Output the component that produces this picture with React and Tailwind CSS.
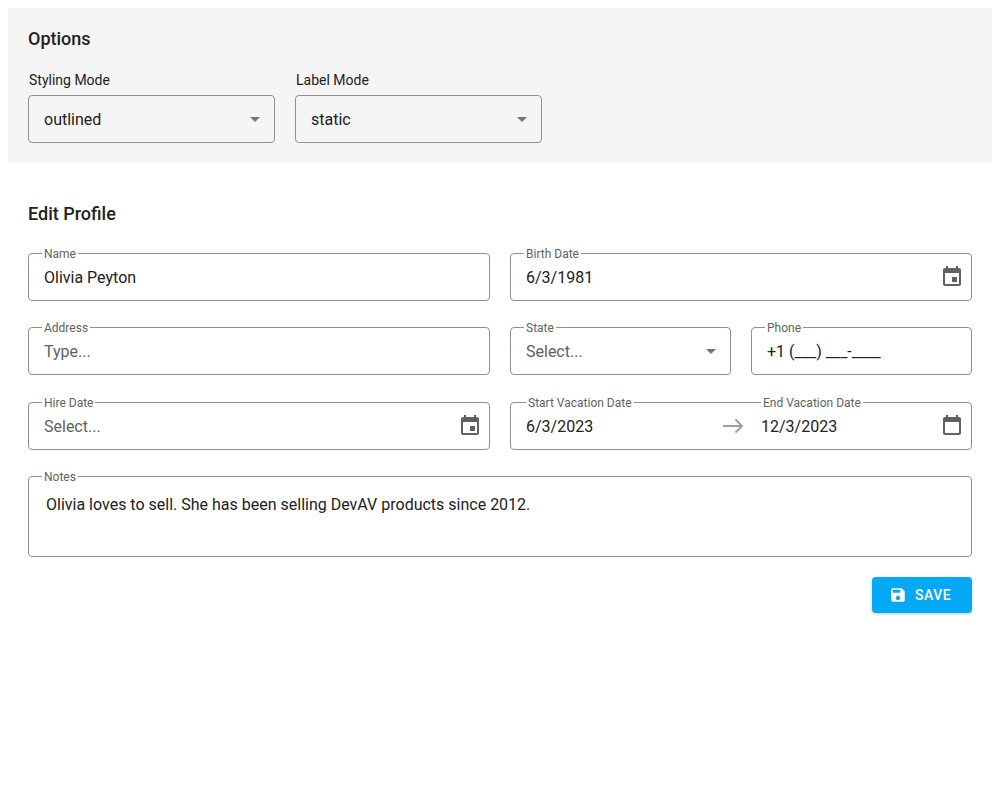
const EVENT = "M17 12h-5v5h5v-5zM16 1v2H8V1H6v2H5c-1.11 0-1.99.9-1.99 2L3 19c0 1.1.89 2 2 2h14c1.1 0 2-.9 2-2V5c0-1.1-.9-2-2-2h-1V1h-2zm3 18H5V8h14v11z";
const RANGE = "M16 1v2H8V1H6v2H5c-1.11 0-1.99.9-1.99 2L3 19c0 1.1.89 2 2 2h14c1.1 0 2-.9 2-2V5c0-1.1-.9-2-2-2h-1V1h-2zm3 18H5V8h14v11z";

function Icon({ d, className }) {
  return (
    <svg viewBox="0 0 24 24" width="24" height="24" className={className} fill="currentColor">
      <path d={d} />
    </svg>
  );
}

function Caret() {
  return <Icon d="M7 10l5 5 5-5z" className="text-[#757575] shrink-0" />;
}

function FloatLabel({ children, className = "left-[13px]" }) {
  return (
    <span className={`absolute top-[-7px] ${className} bg-white px-[2px] text-xs leading-[14px] text-[#616161] whitespace-nowrap`}>
      {children}
    </span>
  );
}

function Field({ label, value, placeholder, icon, caret, className = "" }) {
  return (
    <div className={`relative h-12 flex items-center border border-[#8f8f8f] rounded pl-[15px] pr-[7px] ${className}`}>
      <FloatLabel>{label}</FloatLabel>
      <span className={`flex-1 text-base pt-[1px] ${placeholder ? "text-[#616161]" : "text-[#212121]"}`}>{value || placeholder}</span>
      {icon && <Icon d={icon} className="text-[#616161] shrink-0" />}
      {caret && <Caret />}
    </div>
  );
}

function OptionSelect({ label, value }) {
  return (
    <div className="w-[247px]">
      <div className="text-sm leading-[16px] text-[#212121] pl-[1px] mb-[7px]">{label}</div>
      <div className="h-12 flex items-center border border-[#8f8f8f] rounded pl-[15px] pr-[7px]">
        <span className="flex-1 text-base pt-[1px] text-[#212121]">{value}</span>
        <Caret />
      </div>
    </div>
  );
}

export default function App() {
  return (
    <div className="p-2 bg-white min-h-[800px] font-['Roboto',sans-serif] text-[#212121]">
      <section className="bg-[#f5f5f5] h-[155px] px-5 pt-[19px]">
        <h2 className="text-lg leading-6 font-medium mb-[21px]">Options</h2>
        <div className="flex gap-5">
          <OptionSelect label="Styling Mode" value="outlined" />
          <OptionSelect label="Label Mode" value="static" />
        </div>
      </section>

      <section className="px-5 pt-[39px]">
        <h2 className="text-lg leading-6 font-medium mb-[27px]">Edit Profile</h2>
        <div className="flex flex-col">
          <div className="grid grid-cols-2 gap-5">
            <Field label="Name" value="Olivia Peyton" />
            <Field label="Birth Date" value="6/3/1981" icon={EVENT} />
          </div>
          <div className="grid grid-cols-2 gap-5 mt-[26px]">
            <Field label="Address" placeholder="Type..." />
            <div className="grid grid-cols-2 gap-5">
              <Field label="State" placeholder="Select..." caret />
              <Field label="Phone" value="+1 (___) ___-____" />
            </div>
          </div>
          <div className="grid grid-cols-2 gap-5 mt-[27px]">
            <Field label="Hire Date" placeholder="Select..." icon={EVENT} />
            <div className="relative h-12 flex items-center border border-[#8f8f8f] rounded pl-[15px] pr-[7px]">
              <FloatLabel className="left-[15px]">Start Vacation Date</FloatLabel>
              <FloatLabel className="left-[250px]">End Vacation Date</FloatLabel>
              <span className="w-[196px] text-base pt-[1px]">6/3/2023</span>
              <svg width="22" height="16" viewBox="0 0 22 16" className="text-[#9e9e9e] shrink-0" fill="none" stroke="currentColor" strokeWidth="2">
                <path d="M1 8h19M13.5 1.5L20 8l-6.5 6.5" />
              </svg>
              <span className="flex-1 text-base pl-[17px] pt-[1px]">12/3/2023</span>
              <Icon d={RANGE} className="text-[#616161] shrink-0" />
            </div>
          </div>
          <div className="relative h-[81px] border border-[#8f8f8f] rounded pl-[17px] pt-[16px] mt-[26px]">
            <FloatLabel>Notes</FloatLabel>
            <p className="text-base leading-6">Olivia loves to sell. She has been selling DevAV products since 2012.</p>
          </div>
        </div>
        <div className="flex justify-end mt-5">
          <button className="h-9 w-[100px] flex items-center justify-start pl-[17px] gap-2 rounded bg-[#03a9f4] text-white text-sm font-medium tracking-[0.5px] shadow-[0_1px_3px_rgba(0,0,0,0.24)]">
            <Icon d="M17 3H5c-1.11 0-2 .9-2 2v14c0 1.1.89 2 2 2h14c1.1 0 2-.9 2-2V7l-4-4zm-5 16c-1.66 0-3-1.34-3-3s1.34-3 3-3 3 1.34 3 3-1.34 3-3 3zm3-10H5V5h10v4z" className="w-[18px] h-[18px]" />
            SAVE
          </button>
        </div>
      </section>
    </div>
  );
}
